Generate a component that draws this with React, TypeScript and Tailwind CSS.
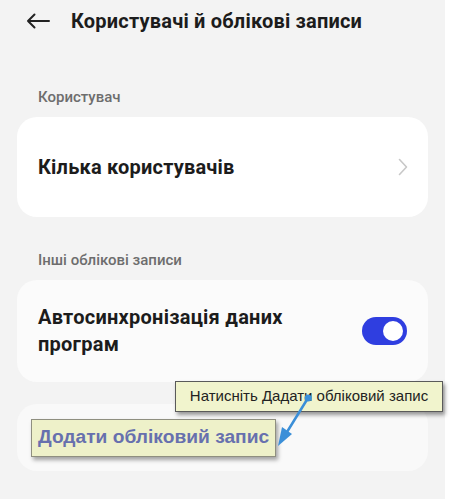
import React from "react";

export default function App() {
  return (
    <div className="w-[453px] h-[499px] bg-white flex overflow-hidden" style={{ fontFamily: "Roboto, 'Noto Sans', sans-serif" }}>
      <div className="relative w-[445px] h-full bg-[#f3f3f3] flex flex-col">
        {/* Header */}
        <div className="h-[42px] flex items-center pl-[26px]">
          <svg width="24" height="16" viewBox="0 0 24 16" fill="none" stroke="#222" strokeWidth="2" strokeLinecap="round" strokeLinejoin="round">
            <path d="M23 8H2M8.5 1.5L2 8l6.5 6.5" />
          </svg>
          <span className="ml-[21px] text-[20px] font-bold text-[#1c1c1c] tracking-[0.2px]">Користувачі й облікові записи</span>
        </div>

        <div className="pl-[38px] mt-[44px] text-[15px] font-medium text-[#6d6d6d] leading-[22px]">Користувач</div>

        <div className="mx-[17px] mt-[9px] h-[100px] rounded-[20px] bg-white flex items-center pl-[21px] pr-[20px]">
          <span className="flex-1 text-[20px] font-bold text-[#1c1c1c] tracking-[0.2px]">Кілька користувачів</span>
          <svg width="10" height="18" viewBox="0 0 10 18" fill="none" stroke="#c8c8c8" strokeWidth="1.6" strokeLinecap="round" strokeLinejoin="round">
            <path d="M1.5 1.5L8.5 9l-7 7.5" />
          </svg>
        </div>

        <div className="pl-[38px] mt-[32px] text-[15px] font-medium text-[#6d6d6d] leading-[22px]">Інші облікові записи</div>

        <div className="mx-[17px] mt-[9px] h-[102px] rounded-[20px] bg-[#fbfbfb] flex items-center pl-[21px] pr-[21px]">
          <span className="flex-1 text-[20px] font-bold text-[#1c1c1c] leading-[27px] tracking-[0.25px]">Автосинхронізація даних<br />програм</span>
          <div className="w-[45px] h-[28px] rounded-full bg-[#2f3ee0] flex items-center justify-end pr-[4px]">
            <div className="w-[20px] h-[20px] rounded-full bg-white" />
          </div>
        </div>

        <div className="mx-[17px] mt-[22px] h-[67px] rounded-[20px] bg-[#f9f9f9] flex items-center pl-[14px]">
          <div className="h-[38px] flex items-center px-[6px] bg-[#eef1c9] border border-[#8f8f80] shadow-[2px_3px_4px_rgba(0,0,0,0.35)]">
            <span className="text-[19.2px] font-bold text-[#6770ae]" style={{ fontFamily: "'Liberation Sans', Arial, sans-serif" }}>Додати обліковий запис</span>
          </div>
        </div>

        {/* Tooltip */}
        <div
          className="absolute left-[175px] top-[381px] w-[268px] h-[31px] bg-[#f1f4cd] border border-[#5a5a5a] shadow-[2px_3px_4px_rgba(0,0,0,0.4)] flex items-center justify-center text-[15px] text-[#222]"
          style={{ fontFamily: "'Liberation Sans', Arial, sans-serif" }}
        >
          Натисніть Дадати обліковий запис
        </div>

        {/* Arrow */}
        <svg className="absolute left-0 top-0" width="445" height="499" viewBox="0 0 445 499">
          <line x1="308" y1="398" x2="287" y2="432" stroke="#3b8fd8" strokeWidth="2.5" strokeLinecap="round" />
          <polygon points="278,446 282,427 292,434" fill="#3b8fd8" />
          <circle cx="308" cy="398" r="3.5" fill="#3b8fd8" />
        </svg>
      </div>
    </div>
  );
}
